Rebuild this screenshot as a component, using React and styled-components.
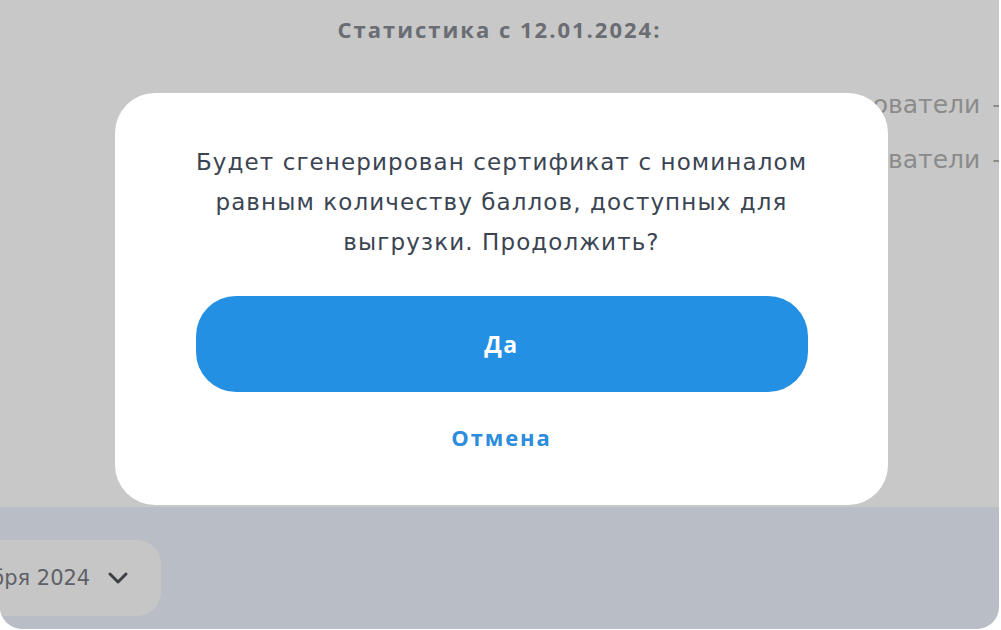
import React from "react";
import styled, { createGlobalStyle } from "styled-components";

const Global = createGlobalStyle`
  html, body { margin: 0; padding: 0; background: #ffffff; }
  body { font-family: "DejaVu Sans", "Open Sans", sans-serif; }
  * { box-sizing: border-box; }
`;

const Frame = styled.div`
  position: relative;
  width: 999px;
  height: 629px;
  border-radius: 0 0 22px 22px;
  overflow: hidden;
  display: flex;
  flex-direction: column;
  background: #b9bdc5;
`;

const TopArea = styled.div`
  height: 507px;
  background: #c8c8c8;
  display: flex;
  flex-direction: column;
`;

const Title = styled.h2`
  margin: 0;
  padding-top: 14px;
  text-align: center;
  font-family: "Open Sans", sans-serif;
  font-size: 22px;
  line-height: 30px;
  font-weight: 700;
  letter-spacing: 2px;
  color: #6a6d73;
`;

const StatList = styled.div`
  margin-top: 46px;
  display: flex;
  flex-direction: column;
  align-items: flex-end;
  gap: 25px;
  margin-right: -46px;
`;

const StatLine = styled.div`
  font-size: 25px;
  line-height: 30px;
  word-spacing: 4px;
  color: #8b8b8b;
  white-space: nowrap;
`;

const BottomArea = styled.div`
  flex: 1;
  display: flex;
  align-items: flex-start;
  padding-top: 33px;
`;

const MonthPill = styled.div`
  margin-left: -115px;
  height: 76px;
  padding: 0 32px 0 40px;
  border-radius: 24px;
  background: #c6c6c6;
  display: flex;
  align-items: center;
  gap: 17px;
  font-size: 21px;
  font-weight: 400;
  color: #5f6166;
`;

const Modal = styled.div`
  position: absolute;
  left: 115px;
  top: 93px;
  width: 773px;
  height: 412px;
  background: #ffffff;
  border-radius: 40px;
  display: flex;
  flex-direction: column;
  align-items: center;
  padding-top: 49px;
`;

const Message = styled.p`
  margin: 0;
  text-align: center;
  font-size: 23px;
  line-height: 40px;
  color: #3a4452;
  letter-spacing: 1.1px;
`;

const PrimaryButton = styled.button`
  margin-top: 34px;
  width: 612px;
  height: 96px;
  border: none;
  border-radius: 40px;
  background: #2490e3;
  color: #ffffff;
  font-family: "Open Sans", sans-serif;
  font-size: 23px;
  font-weight: 700;
  letter-spacing: 1.4px;
  cursor: pointer;
`;

const LinkButton = styled.button`
  margin-top: 30px;
  border: none;
  background: none;
  padding: 0;
  font-family: "Open Sans", sans-serif;
  font-size: 22px;
  line-height: 30px;
  font-weight: 700;
  color: #2b8ddb;
  letter-spacing: 1.9px;
  cursor: pointer;
`;

const Chevron = () => (
  <svg width="22" height="14" viewBox="0 0 22 14" fill="none">
    <path d="M3 3l8 8 8-8" stroke="#3d3f44" strokeWidth="3" strokeLinecap="round" strokeLinejoin="round" />
  </svg>
);

export default function App() {
  return (
    <>
      <Global />
      <Frame>
        <TopArea>
          <Title>Статистика с 12.01.2024:</Title>
          <StatList>
            <StatLine>Пользователи - 12</StatLine>
            <StatLine>Пользователи - 34</StatLine>
          </StatList>
        </TopArea>
        <BottomArea>
          <MonthPill>
            <span>Сентября 2024</span>
            <Chevron />
          </MonthPill>
        </BottomArea>
        <Modal>
          <Message>
            Будет сгенерирован сертификат с номиналом
            <br />
            равным количеству баллов, доступных для
            <br />
            выгрузки. Продолжить?
          </Message>
          <PrimaryButton>Да</PrimaryButton>
          <LinkButton>Отмена</LinkButton>
        </Modal>
      </Frame>
    </>
  );
}
